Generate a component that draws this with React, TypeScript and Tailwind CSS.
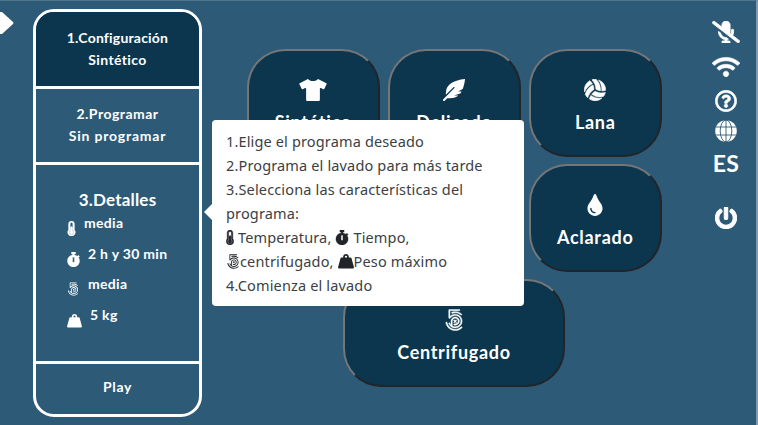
import type { ReactNode } from "react";
import {
  Fa500Px, FaFeatherAlt, FaMicrophoneSlash, FaPowerOff, FaRegQuestionCircle,
  FaStopwatch, FaThermometerHalf, FaTint, FaTshirt, FaVolleyballBall, FaWifi,
} from "react-icons/fa";

function Globe({ className }: { className: string }) {
  return (
    <svg viewBox="0 0 22 22" className={className}>
      <circle cx="11" cy="11" r="10.8" fill="currentColor" />
      <g fill="none" stroke="#2d5a77" strokeWidth="0.9">
        <path d="M11 0v22M1 7h20M1 15h20" />
        <ellipse cx="11" cy="11" rx="5.8" ry="11" />
      </g>
    </svg>
  );
}

function Weight({ className }: { className: string }) {
  return (
    <svg viewBox="0 0 16 16" fill="currentColor" className={className}>
      <path d="M5.2 4.4C4.9 2.4 6.2 1 8 1s3.100 1.400 2.800 3.400h1.700q.8 0 1 .8L15.900 14q.3 1.500-1 1.500H1.100q-1.300 0-1-1.500L2.500 5.200q.2-.8 1-.8zM7 4.400h2Q9.400 2.700 8 2.700T7 4.400z" />
    </svg>
  );
}

function Program({ icon, label, wide = false }: { icon: ReactNode; label: string; wide?: boolean }) {
  return (
    <button
      className={`${wide ? "w-[222px]" : "w-[133.5px]"} flex h-[108px] shrink-0 flex-col items-center rounded-[38px] border-[2.5px] border-t-[#767676] border-r-[#212529] border-b-[#212529] border-l-[#767676] bg-[#0b364e] pt-[28px] text-[18px] leading-6 font-bold tracking-[0.7px]`}
    >
      <span className="flex h-[22px] items-center text-[22px]">{icon}</span>
      <span className="mt-[9px]">{label}</span>
    </button>
  );
}

function Detail({ icon, label, gap }: { icon: ReactNode; label: string; gap: string }) {
  return (
    <div className={`flex h-[30.5px] items-start ${gap}`}>
      <span className="pt-[8px]">{icon}</span>
      <span className="leading-5 tracking-[0.3px]">{label}</span>
    </div>
  );
}

export default function App() {
  return (
    <div className="relative flex h-[425px] w-[758px] overflow-hidden border-t border-r-2 border-t-[#52768e] border-r-[#7f9bad] bg-[#2d5a77] font-['Lato',sans-serif] text-white">
      <div className="w-[33px] shrink-0 pt-[11px]">
        <svg width="14" height="22" viewBox="0 0 14 22" fill="currentColor">
          <path d="M0 0h2L13 10Q14 11 13 12L2 22H0z" />
        </svg>
      </div>

      <aside className="mt-[8px] flex h-[408px] w-[169px] shrink-0 flex-col overflow-hidden rounded-[21px] border-[3px] border-white text-center text-[14px] leading-[21.5px] font-bold">
        <div className="h-[77px] shrink-0 border-b-[3px] border-white bg-[#0b364e] pt-[15px]">
          <div className="tracking-[0.2px]">1.Configuración</div>
          <div className="tracking-[0.4px]">Sintético</div>
        </div>
        <div className="h-[76px] shrink-0 border-b-[3px] border-white pt-[14px]">
          <div className="tracking-[0.5px]">2.Programar</div>
          <div className="tracking-[0.8px]">Sin programar</div>
        </div>
        <div className="h-[199px] shrink-0 border-b-[3px] border-white pt-[23px]">
          <h2 className="text-[17px] leading-6 tracking-[0.2px]">3.Detalles</h2>
          <div className="pt-[1px] pl-[31px] text-left">
            <Detail gap="gap-[8px]" icon={<FaThermometerHalf stroke="currentColor" strokeWidth="20" className="h-[15px] w-[9px]" />} label="media" />
            <Detail gap="gap-[8px]" icon={<FaStopwatch stroke="currentColor" strokeWidth="12" className="h-[15px] w-[13px]" />} label="2 h y 30 min" />
            <Detail gap="gap-[9px]" icon={<Fa500Px className="h-[14px] w-[12px]" />} label="media" />
            <Detail gap="gap-[8px]" icon={<Weight className="h-[15px] w-[15px]" />} label="5 kg" />
          </div>
        </div>
        <div className="pt-[12px] tracking-[0.6px]">Play</div>
      </aside>

      <main className="mt-[48px] ml-[44px] flex w-[416px] shrink-0 flex-col items-end gap-[7px]">
        <div className="flex gap-[7.5px]">
          <Program icon={<FaTshirt className="w-[28px]" />} label="Sintético" />
          <Program icon={<FaFeatherAlt />} label="Delicado" />
          <Program icon={<FaVolleyballBall stroke="currentColor" strokeWidth="14" />} label="Lana" />
        </div>
        <Program icon={<FaTint />} label="Aclarado" />
        <div className="pr-[97px]">
          <Program wide icon={<Fa500Px stroke="currentColor" strokeWidth="10" />} label="Centrifugado" />
        </div>
      </main>

      <nav className="ml-[48px] flex w-[32px] shrink-0 flex-col items-center pt-[20px] text-[22px]">
        <FaMicrophoneSlash stroke="currentColor" strokeWidth="18" className="h-[22px] w-[28px]" />
        <FaWifi stroke="currentColor" strokeWidth="14" className="mt-[13px] h-[22px] w-[28px]" />
        <FaRegQuestionCircle stroke="currentColor" strokeWidth="14" className="mt-[12px]" />
        <Globe className="mt-[8px] h-[22px] w-[22px]" />
        <span className="mt-[9px] text-[23px] leading-6 font-bold tracking-[0.3px]">ES</span>
        <FaPowerOff stroke="currentColor" strokeWidth="24" className="mt-[32px]" />
      </nav>

      <div className="absolute top-[119px] left-[212px] h-[186px] w-[312px] rounded-[4px] bg-white px-[14px] pt-[9px] font-['Noto_Sans',sans-serif] text-[14.5px] leading-6 tracking-[0.15px] whitespace-nowrap text-[#3b3f44]">
        <div className="absolute top-[84px] -left-[8px] size-0 border-y-[8px] border-r-[8px] border-y-transparent border-r-white" />
        <p>1.Elige el programa deseado</p>
        <p>2.Programa el lavado para más tarde</p>
        <p>3.Selecciona las características del</p>
        <p>programa:</p>
        <p className="flex items-center">
          <FaThermometerHalf stroke="currentColor" strokeWidth="16" className="mr-[4px] h-[15px] w-[8px] text-[#212529]" />
          <span>Temperatura,</span>
          <FaStopwatch stroke="currentColor" strokeWidth="12" className="mr-[4px] ml-[4px] h-[15px] w-[14px] text-[#212529]" />
          <span>Tiempo,</span>
        </p>
        <p className="flex items-center">
          <Fa500Px className="h-[15px] w-[14px] text-[#212529]" />
          <span>centrifugado,</span>
          <Weight className="ml-[4px] h-[16px] w-[16px] text-[#212529]" />
          <span>Peso máximo</span>
        </p>
        <p>4.Comienza el lavado</p>
      </div>
    </div>
  );
}
